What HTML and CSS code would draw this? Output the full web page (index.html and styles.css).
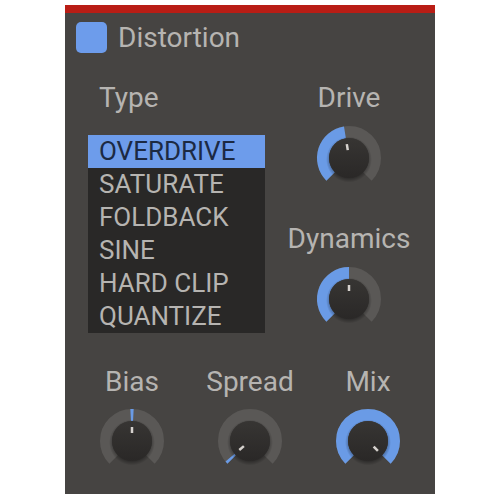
FILE: index.html
```html
<!DOCTYPE html>
<html>
<head>
<meta charset="utf-8">
<link rel="stylesheet" href="styles.css">
</head>
<body>
<svg class="defs" width="0" height="0" aria-hidden="true">
  <defs>
    <linearGradient id="bodyGrad" x1="0" y1="0" x2="0" y2="1">
      <stop offset="0" stop-color="#373533"/>
      <stop offset="1" stop-color="#2a2827"/>
    </linearGradient>
    <radialGradient id="shadowGrad" cx="0.5" cy="0.5" r="0.5">
      <stop offset="0.8" stop-color="#000" stop-opacity="0.35"/>
      <stop offset="1" stop-color="#000" stop-opacity="0"/>
    </radialGradient>
  </defs>
</svg>
<div class="panel">
  <div class="header">
    <div class="checkbox"></div>
    <div class="title">Distortion</div>
  </div>
  <div class="main">
    <div class="left">
      <div class="label type-label">Type</div>
      <ul class="list">
        <li class="selected">OVERDRIVE</li>
        <li>SATURATE</li>
        <li>FOLDBACK</li>
        <li>SINE</li>
        <li>HARD CLIP</li>
        <li>QUANTIZE</li>
      </ul>
    </div>
    <div class="right">
      <div class="knob-group">
        <div class="label">Drive</div>
        <svg class="knob" viewBox="0 0 70 70" width="70" height="70">
          <path class="track" d="M16.615 53.385 A26 26 0 1 1 53.385 53.385"/>
          <path class="value" d="M16.615 53.385 A26 26 0 0 1 30.93 9.32"/>
          <circle cx="35" cy="36.5" r="23" fill="url(#shadowGrad)"/>
          <circle cx="35" cy="35" r="20" fill="url(#bodyGrad)"/>
          <line class="ind" x1="33.75" y1="27.1" x2="32.81" y2="21.17"/>
        </svg>
      </div>
      <div class="knob-group">
        <div class="label">Dynamics</div>
        <svg class="knob" viewBox="0 0 70 70" width="70" height="70">
          <path class="track" d="M16.615 53.385 A26 26 0 1 1 53.385 53.385"/>
          <path class="value" d="M16.615 53.385 A26 26 0 0 1 35 9"/>
          <circle cx="35" cy="36.5" r="23" fill="url(#shadowGrad)"/>
          <circle cx="35" cy="35" r="20" fill="url(#bodyGrad)"/>
          <line class="ind" x1="35" y1="27" x2="35" y2="21"/>
        </svg>
      </div>
    </div>
  </div>
  <div class="bottom">
    <div class="knob-group">
      <div class="label">Bias</div>
      <svg class="knob" viewBox="0 0 70 70" width="70" height="70">
        <path class="track" d="M16.615 53.385 A26 26 0 1 1 53.385 53.385"/>
        <path class="value" d="M33.64 9.04 A26 26 0 0 1 36.36 9.04"/>
        <circle cx="35" cy="36.5" r="23" fill="url(#shadowGrad)"/>
        <circle cx="35" cy="35" r="20" fill="url(#bodyGrad)"/>
        <line class="ind" x1="35" y1="27" x2="35" y2="21"/>
      </svg>
    </div>
    <div class="knob-group">
      <div class="label">Spread</div>
      <svg class="knob" viewBox="0 0 70 70" width="70" height="70">
        <path class="track" d="M16.615 53.385 A26 26 0 1 1 53.385 53.385"/>
        <path class="value" d="M16.615 53.385 A26 26 0 0 1 15.08 51.71"/>
        <circle cx="35" cy="36.5" r="23" fill="url(#shadowGrad)"/>
        <circle cx="35" cy="35" r="20" fill="url(#bodyGrad)"/>
        <line class="ind" x1="28.87" y1="40.14" x2="24.28" y2="44"/>
      </svg>
    </div>
    <div class="knob-group">
      <div class="label">Mix</div>
      <svg class="knob" viewBox="0 0 70 70" width="70" height="70">
        <path class="track" d="M16.615 53.385 A26 26 0 1 1 53.385 53.385"/>
        <path class="value" d="M16.615 53.385 A26 26 0 1 1 53.385 53.385"/>
        <circle cx="35" cy="36.5" r="23" fill="url(#shadowGrad)"/>
        <circle cx="35" cy="35" r="20" fill="url(#bodyGrad)"/>
        <line class="ind" x1="40.66" y1="40.66" x2="44.9" y2="44.9"/>
      </svg>
    </div>
  </div>
</div>
</body>
</html>
```

FILE: styles.css
```css
html, body {
  margin: 0;
  padding: 0;
  background: #ffffff;
}

body {
  font-family: Roboto, "Liberation Sans", sans-serif;
  color: #b6b4b1;
}

.defs {
  position: absolute;
  width: 0;
  height: 0;
}

.panel {
  box-sizing: border-box;
  width: 370px;
  height: 489px;
  margin: 5px 0 0 65px;
  background: #464442;
  border-top: 8px solid #b91d15;
}

.header {
  display: flex;
  align-items: flex-start;
  gap: 11px;
  padding: 9px 0 0 11px;
}

.checkbox {
  width: 31px;
  height: 31px;
  border-radius: 5px;
  background: #6d9ceb;
}

.title {
  font-size: 28px;
  line-height: 32px;
}

.label {
  font-size: 28px;
  line-height: 32px;
}

.main {
  display: grid;
  grid-template-columns: 177px 1fr;
  margin-top: 28px;
  padding: 0 2px 0 23px;
}

.type-label {
  padding-left: 11px;
}

.list {
  list-style: none;
  margin: 21px 0 0 0;
  padding: 0;
  background: #292827;
}

.list li {
  height: 33px;
  line-height: 33px;
  font-size: 26px;
  padding-left: 11px;
  color: #b6b4b1;
}

.list li.selected {
  background: #6d9ceb;
  color: #1c2a43;
}

.right {
  display: flex;
  flex-direction: column;
  align-items: center;
  gap: 30px;
}

.knob-group {
  display: flex;
  flex-direction: column;
  align-items: center;
  gap: 9px;
}

.knob {
  display: block;
}

.track {
  fill: none;
  stroke: #5a5856;
  stroke-width: 12;
}

.value {
  fill: none;
  stroke: #6a9be6;
  stroke-width: 12;
}

.ind {
  stroke: #d6d2ce;
  stroke-width: 2.5;
}

.bottom {
  display: grid;
  grid-template-columns: repeat(3, 1fr);
  margin-top: 32px;
  padding: 0 8px;
}

.bottom .knob-group {
  gap: 8px;
}
```
